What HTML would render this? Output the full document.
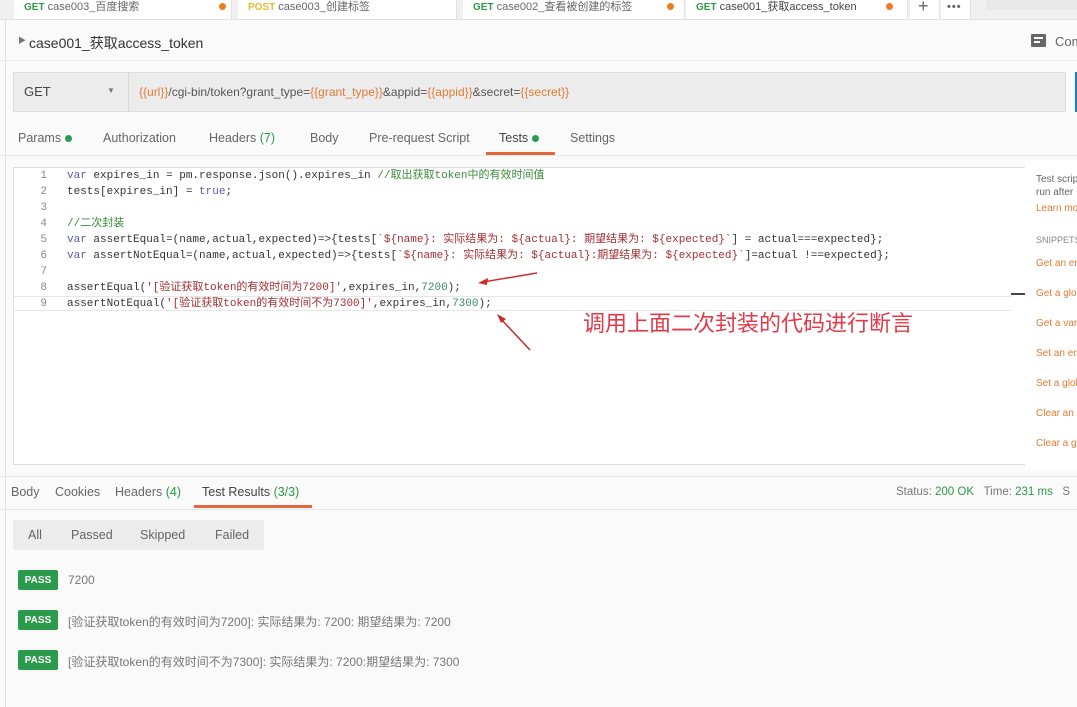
<!DOCTYPE html>
<html><head><meta charset="utf-8"><style>
*{margin:0;padding:0;box-sizing:border-box}
body{width:1077px;height:707px;overflow:hidden;background:#fafafa;font-family:"Liberation Sans","Noto Sans CJK SC",sans-serif;color:#505050;position:relative;font-size:13px}
.a{position:absolute;white-space:nowrap}
.g{color:#2b9a44}.o{color:#e07b35}.y{color:#e8b830}
.mono{font-family:"Liberation Mono","Noto Sans CJK SC",monospace;font-size:11px}
.tab{position:absolute;top:0;height:19px;background:#fff;border-right:1px solid #e2e2e2;font-size:11px;color:#666;line-height:14px;padding-left:10px;white-space:nowrap}
.dot{position:absolute;width:7px;height:7px;border-radius:50%;background:#f07a26;top:3px}
.kw{color:#5a5aa8}.cm{color:#3a8a3a}.st{color:#a03030}.nu{color:#3a8a6a}
.pass{position:absolute;left:18px;width:40px;height:20px;background:#2c9a4c;color:#fff;font-size:10px;font-weight:bold;display:flex;align-items:center;justify-content:center;border-radius:2px}
.res{position:absolute;left:68px;font-size:12px;color:#777;white-space:nowrap}
.sn{position:absolute;left:11px;font-size:10px;color:#e07b35;white-space:nowrap}
</style></head><body>
<div class="a" style="left:5px;top:0;width:1px;height:707px;background:#e0e0e0"></div>
<div class="a" style="left:0;top:0;width:1077px;height:20px;background:#f0f0f0;border-bottom:1px solid #e2e2e2"></div>
<div class="tab" style="left:14px;width:218px"><span class="g" style="font-size:10px;font-weight:bold">GET</span> case003_百度搜索<span class="dot" style="left:205px"></span></div>
<div class="tab" style="left:238px;width:219px"><span class="y" style="font-size:10px;font-weight:bold">POST</span> case003_创建标签</div>
<div class="tab" style="left:463px;width:222px"><span class="g" style="font-size:10px;font-weight:bold">GET</span> case002_查看被创建的标签<span class="dot" style="left:204px"></span></div>
<div class="tab" style="left:686px;width:222px;border-bottom:1px solid #fff;color:#444"><span class="g" style="font-size:10px;font-weight:bold">GET</span> case001_获取access_token<span class="dot" style="left:200px"></span></div>
<div class="tab" style="left:910px;width:30px;font-size:18px;color:#666;padding-left:8px;line-height:12px">+</div>
<div class="tab" style="left:941px;width:30px;padding-left:6px;letter-spacing:1px;font-weight:bold">•••</div>
<div class="a" style="left:986px;top:0;width:91px;height:10px;background:#e8e8e8"></div>

<div class="a" style="left:18px;top:35px;font-size:8px;color:#777">▶</div>
<div class="a" style="left:29px;top:33px;font-size:14px;color:#333">case001_获取access_token</div>
<div class="a" style="left:1031px;top:34px;width:15px;height:13px;background:#666;border-radius:1px"></div>
<div class="a" style="left:1034px;top:37px;width:9px;height:2px;background:#fff"></div>
<div class="a" style="left:1034px;top:41px;width:6px;height:2px;background:#fff"></div>
<div class="a" style="left:1055px;top:34px;font-size:13px;color:#666">Com</div>
<div class="a" style="left:0;top:60px;width:1077px;height:1px;background:#ececec"></div>

<div class="a" style="left:13px;top:72px;width:1053px;height:40px;background:#ececec;border:1px solid #dcdcdc"></div>
<div class="a" style="left:128px;top:73px;width:1px;height:38px;background:#d8d8d8"></div>
<div class="a" style="left:24px;top:84px;font-size:13px;color:#444">GET</div>
<div class="a" style="left:107px;top:86px;font-size:8px;color:#777">▼</div>
<div class="a" style="left:139px;top:85px;font-size:12px;color:#555"><span class="o">{{url}}</span>/cgi-bin/token?grant_type=<span class="o">{{grant_type}}</span>&amp;appid=<span class="o">{{appid}}</span>&amp;secret=<span class="o">{{secret}}</span></div>
<div class="a" style="left:1075px;top:72px;width:2px;height:40px;background:#1a7ec8"></div>

<div class="a" style="left:18px;top:131px;font-size:12.5px;color:#666">Params <span style="display:inline-block;width:7px;height:7px;border-radius:50%;background:#2c9a4c"></span></div>
<div class="a" style="left:103px;top:131px;font-size:12.5px;color:#666">Authorization</div>
<div class="a" style="left:209px;top:131px;font-size:12.5px;color:#666">Headers <span class="g">(7)</span></div>
<div class="a" style="left:310px;top:131px;font-size:12.5px;color:#666">Body</div>
<div class="a" style="left:369px;top:131px;font-size:12.5px;color:#666">Pre-request Script</div>
<div class="a" style="left:499px;top:131px;font-size:12.5px;color:#444">Tests <span style="display:inline-block;width:7px;height:7px;border-radius:50%;background:#2c9a4c"></span></div>
<div class="a" style="left:570px;top:131px;font-size:12.5px;color:#666">Settings</div>
<div class="a" style="left:486px;top:152px;width:69px;height:3px;background:#e0683a"></div>
<div class="a" style="left:0;top:155px;width:1077px;height:1px;background:#e6e6e6"></div>

<div class="a" style="left:13px;top:167px;width:1013px;height:298px;background:#fff;border:1px solid #dedede"></div>
<div class="a" style="left:13px;top:296px;width:998px;height:15px;border-top:1px solid #e6e6e6;border-bottom:1px solid #e6e6e6"></div>
<div class="a" style="left:1011px;top:293px;width:14px;height:2px;background:#444"></div>
<div class="a mono" style="left:30px;top:168px;line-height:16px;color:#888;text-align:right;width:17px">1<br>2<br>3<br>4<br>5<br>6<br>7<br>8<br>9</div>
<div class="a mono" style="left:67px;top:168px;line-height:16px;color:#333">
<span class="kw">var</span> expires_in = pm.response.json().expires_in   <span class="cm">//取出获取token中的有效时间值</span><br>
tests[expires_in] = <span class="kw">true</span>;<br><br>
<span class="cm">//二次封装</span><br>
<span class="kw">var</span> assertEqual=(name,actual,expected)=&gt;{tests[<span class="st">`${name}: 实际结果为: ${actual}: 期望结果为: ${expected}`</span>] = actual===expected};<br>
<span class="kw">var</span> assertNotEqual=(name,actual,expected)=&gt;{tests[<span class="st">`${name}: 实际结果为: ${actual}:期望结果为: ${expected}`</span>]=actual !==expected};<br><br>
assertEqual(<span class="st">'[验证获取token的有效时间为7200]'</span>,expires_in,<span class="nu">7200</span>);<br>
assertNotEqual(<span class="st">'[验证获取token的有效时间不为7300]'</span>,expires_in,<span class="nu">7300</span>);</div>
<div class="a" style="left:1025px;top:160px;width:52px;height:310px;background:#fff;overflow:hidden">
<div class="a" style="left:11px;top:13px;font-size:10px;color:#666;line-height:13px">Test scripts<br>run after</div>
<div class="sn" style="top:43px">Learn more</div>
<div class="a" style="left:11px;top:75px;font-size:9px;color:#888">SNIPPETS</div>
<div class="sn" style="top:98px">Get an env</div>
<div class="sn" style="top:128px">Get a global</div>
<div class="sn" style="top:158px">Get a var</div>
<div class="sn" style="top:188px">Set an env</div>
<div class="sn" style="top:218px">Set a global</div>
<div class="sn" style="top:248px">Clear an env</div>
<div class="sn" style="top:278px">Clear a glob</div>
</div>
<svg class="a" style="left:470px;top:265px" width="80" height="90"><path d="M67 8 L13 17" stroke="#d42a2a" stroke-width="1.5" fill="none"/><path d="M8 18 L18 13 L17 20 Z" fill="#d42a2a"/><path d="M60 85 L30 53" stroke="#c03030" stroke-width="1.5" fill="none"/><path d="M27 49 L36 54 L31 58 Z" fill="#c03030"/></svg>
<div class="a" style="left:583px;top:306px;font-size:22px;color:#e23a4a;font-family:'Noto Sans CJK SC',sans-serif">调用上面二次封装的代码进行断言</div>

<div class="a" style="left:0;top:476px;width:1077px;height:1px;background:#e6e6e6"></div>
<div class="a" style="left:11px;top:485px;font-size:12.5px;color:#666">Body</div>
<div class="a" style="left:55px;top:485px;font-size:12.5px;color:#666">Cookies</div>
<div class="a" style="left:115px;top:485px;font-size:12.5px;color:#666">Headers <span class="g">(4)</span></div>
<div class="a" style="left:202px;top:485px;font-size:12.5px;color:#444">Test Results <span class="g">(3/3)</span></div>
<div class="a" style="left:194px;top:505px;width:118px;height:3px;background:#e0683a"></div>
<div class="a" style="left:0;top:509px;width:1077px;height:1px;background:#e6e6e6"></div>
<div class="a" style="left:896px;top:486px;font-size:11.5px;color:#777">Status: <span class="g">200 OK</span>&nbsp;&nbsp;&nbsp;Time: <span class="g">231 ms</span>&nbsp;&nbsp;&nbsp;S</div>

<div class="a" style="left:13px;top:520px;width:251px;height:30px;background:#ececec;border-radius:2px"></div>
<div class="a" style="left:28px;top:528px;font-size:12.5px;color:#666">All</div>
<div class="a" style="left:71px;top:528px;font-size:12.5px;color:#666">Passed</div>
<div class="a" style="left:140px;top:528px;font-size:12.5px;color:#666">Skipped</div>
<div class="a" style="left:215px;top:528px;font-size:12.5px;color:#666">Failed</div>

<div class="pass" style="top:570px">PASS</div><div class="res" style="top:573px">7200</div>
<div class="pass" style="top:610px">PASS</div><div class="res" style="top:613px">[验证获取token的有效时间为7200]: 实际结果为: 7200: 期望结果为: 7200</div>
<div class="pass" style="top:650px">PASS</div><div class="res" style="top:653px">[验证获取token的有效时间不为7300]: 实际结果为:  7200:期望结果为: 7300</div>
</body></html>
